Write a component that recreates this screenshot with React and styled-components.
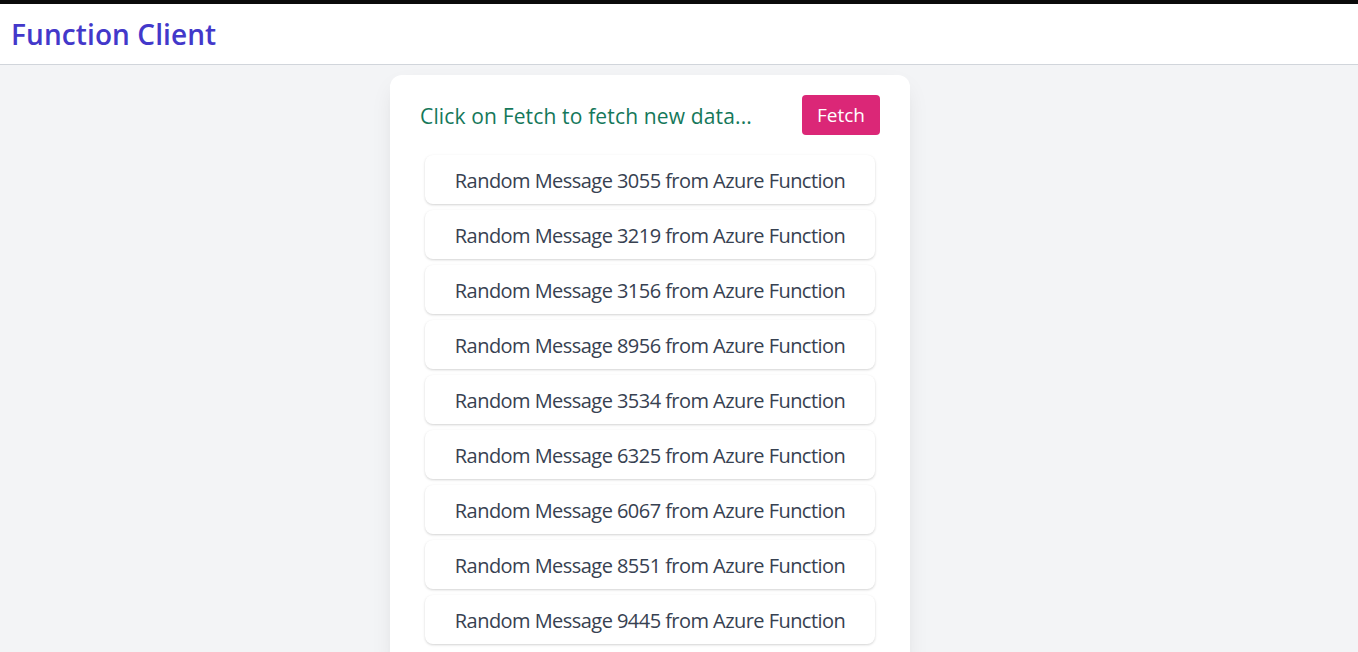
import React from "react";
import styled, { createGlobalStyle } from "styled-components";

const Global = createGlobalStyle`
  html, body { margin: 0; padding: 0; }
  body {
    background: #f3f4f6;
    font-family: "Open Sans", "Noto Sans", "Liberation Sans", sans-serif;
    overflow: hidden;
  }
`;

const Page = styled.div`
  min-height: 652px;
  border-top: 4px solid #0a0a0a;
  box-sizing: border-box;
`;

const Header = styled.header`
  height: 60px;
  background: #ffffff;
  border-bottom: 1px solid #d1d5db;
  display: flex;
  align-items: center;
  padding-left: 11px;
`;

const Title = styled.h1`
  margin: 0;
  font-size: 28px;
  font-weight: 600;
  color: #4338ca;
  letter-spacing: 0.1px;
`;

const Main = styled.main`
  max-width: 1300px;
  display: flex;
  justify-content: center;
  padding-top: 10px;
`;

const Card = styled.section`
  width: 520px;
  box-sizing: border-box;
  background: #ffffff;
  border-radius: 12px;
  padding: 20px 30px 20px;
  box-shadow: 0 10px 25px -5px rgba(0, 0, 0, 0.1), 0 8px 10px -6px rgba(0, 0, 0, 0.08);
`;

const TopRow = styled.div`
  display: flex;
  align-items: center;
  justify-content: space-between;
  height: 40px;
`;

const Hint = styled.p`
  margin: 0;
  font-size: 21px;
  color: #15785a;
  letter-spacing: 0.15px;
  padding-top: 2px;
`;

const FetchButton = styled.button`
  height: 40px;
  width: 78px;
  border: none;
  border-radius: 4px;
  background: #db2777;
  color: #ffffff;
  font-family: inherit;
  font-size: 19px;
  cursor: pointer;
`;

const List = styled.ul`
  list-style: none;
  margin: 20px 0 0;
  padding: 0 5px;
  display: flex;
  flex-direction: column;
  gap: 6px;
`;

const Item = styled.li`
  height: 49px;
  display: flex;
  align-items: center;
  justify-content: center;
  background: #ffffff;
  border-radius: 8px;
  box-shadow: 0 1px 3px rgba(0, 0, 0, 0.12), 0 1px 2px rgba(0, 0, 0, 0.06);
  font-size: 20px;
  color: #374151;
  letter-spacing: -0.55px;
  padding-top: 2px;
  box-sizing: border-box;
`;

const numbers = [3055, 3219, 3156, 8956, 3534, 6325, 6067, 8551, 9445];

export default function App() {
  return (
    <>
      <Global />
      <Page>
        <Header>
          <Title>Function Client</Title>
        </Header>
        <Main>
          <Card>
            <TopRow>
              <Hint>Click on Fetch to fetch new data...</Hint>
              <FetchButton>Fetch</FetchButton>
            </TopRow>
            <List>
              {numbers.map((n) => (
                <Item key={n}>Random Message {n} from Azure Function</Item>
              ))}
            </List>
          </Card>
        </Main>
      </Page>
    </>
  );
}
